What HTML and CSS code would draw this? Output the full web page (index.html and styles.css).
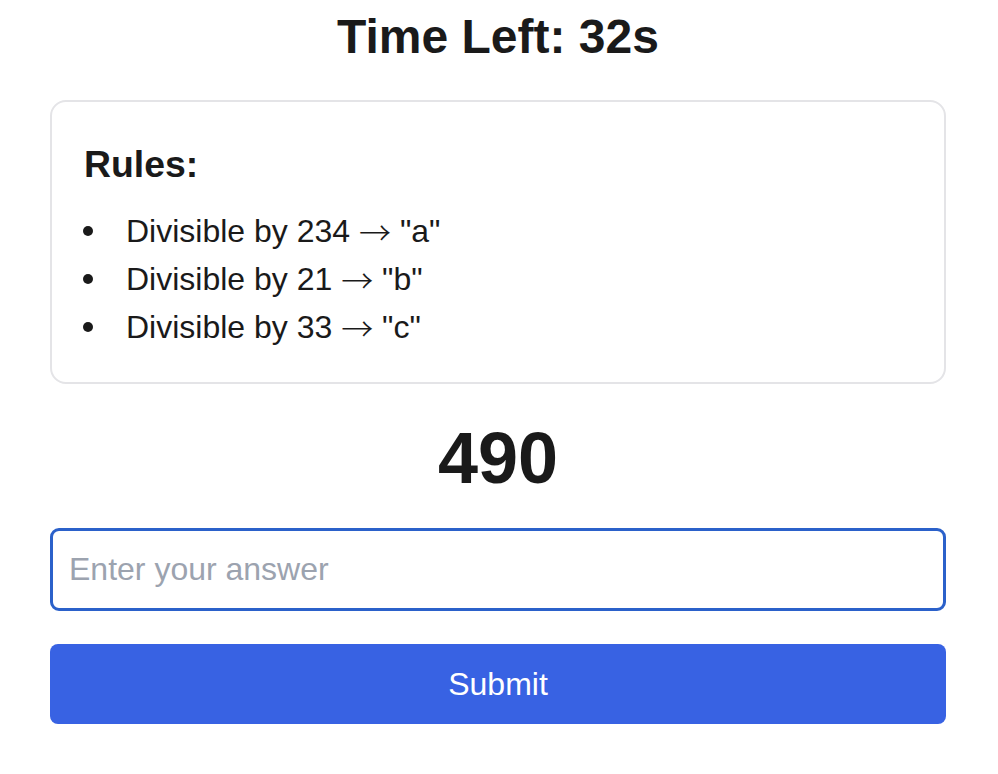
FILE: index.html
```html
<!DOCTYPE html>
<html lang="en">
<head>
<meta charset="utf-8">
<title>Divisibility Game</title>
<link rel="stylesheet" href="styles.css">
</head>
<body>
<main class="game">
  <h1 class="timer">Time Left: 32s</h1>
  <section class="rules">
    <h3 class="rules-title">Rules:</h3>
    <ul class="rules-list">
      <li>Divisible by 234 <span class="arrow">→</span> "a"</li>
      <li>Divisible by 21 <span class="arrow">→</span> "b"</li>
      <li>Divisible by 33 <span class="arrow">→</span> "c"</li>
    </ul>
  </section>
  <div class="number">490</div>
  <input class="answer" type="text" placeholder="Enter your answer" autofocus>
  <button class="submit" type="button">Submit</button>
</main>
</body>
</html>
```

FILE: styles.css
```css
html, body {
  margin: 0;
  padding: 0;
  background: #ffffff;
}

body {
  font-family: "Liberation Sans", Arial, Helvetica, sans-serif;
  color: #1a1a1a;
}

.game {
  width: 896px;
  padding: 9px 0 0 50px;
  display: flex;
  flex-direction: column;
}

.timer {
  margin: 0 0 36px;
  font-size: 48px;
  font-weight: 700;
  line-height: normal;
  text-align: center;
}

.rules {
  border: 2px solid #e4e4e7;
  border-radius: 16px;
  padding: 32px 32px 31px;
}

.rules-title {
  margin: 9px 0 21px;
  font-size: 37.4px;
  font-weight: 700;
  line-height: normal;
}

.rules-list {
  margin: 0;
  padding: 0;
  list-style: none;
  font-size: 32px;
  line-height: 48px;
}

.rules-list li {
  display: flex;
  align-items: center;
  white-space: pre;
}

.rules-list li::before {
  content: "";
  flex: none;
  width: 10px;
  height: 10px;
  border-radius: 50%;
  background: #1a1a1a;
  margin: 0 33px 0 -1px;
}

.arrow {
  font-family: "Noto Sans CJK JP", "Liberation Sans", sans-serif;
  font-weight: 300;
}

.number {
  margin: 33px 0 29px;
  font-size: 72px;
  font-weight: 700;
  line-height: normal;
  text-align: center;
}

.answer {
  box-sizing: border-box;
  height: 83px;
  width: 100%;
  padding: 0 16px;
  border: 3px solid #2b61ca;
  border-radius: 9px;
  font-family: inherit;
  font-size: 32px;
  color: #1a1a1a;
  outline: none;
  background: #fff;
}

.answer::placeholder {
  color: #9ca3af;
}

.answer:focus {
  outline: none;
  border-color: #2b61ca;
}

.submit {
  margin-top: 33px;
  height: 80px;
  width: 100%;
  border: none;
  border-radius: 8px;
  background: #3862e3;
  color: #ffffff;
  font-family: inherit;
  font-size: 32px;
  cursor: pointer;
}
```
